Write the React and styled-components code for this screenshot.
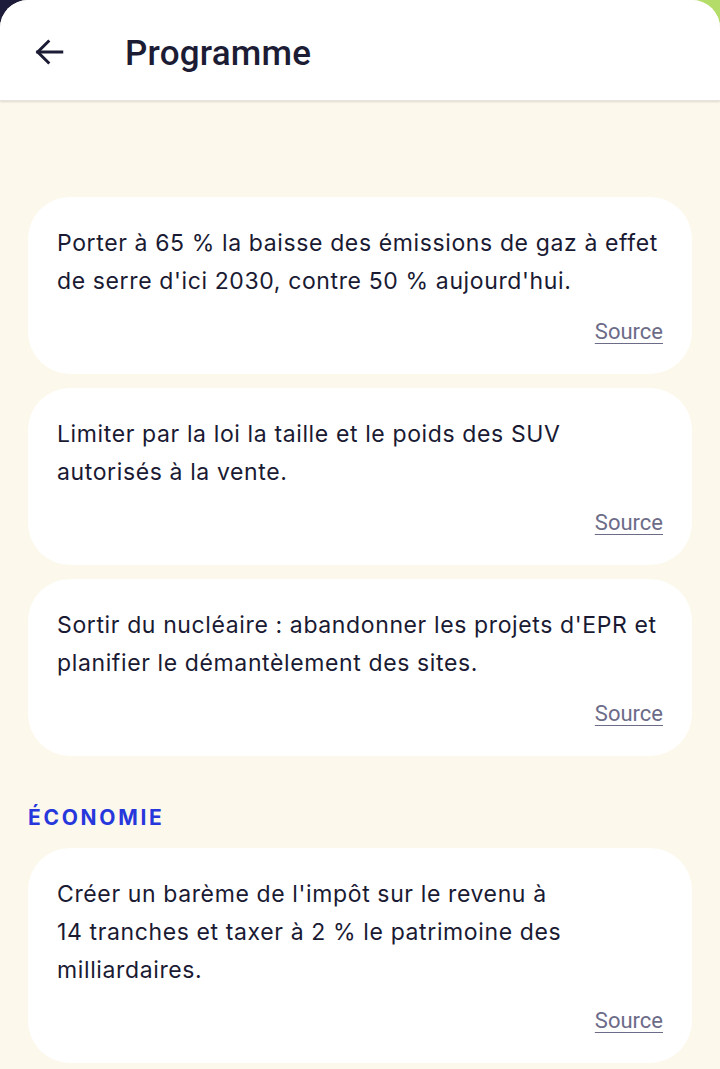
import React from "react";
import styled, { createGlobalStyle } from "styled-components";

const Global = createGlobalStyle`
  html, body { margin: 0; padding: 0; }
  body {
    background: linear-gradient(to right, #1d1d3b 0 50%, #b4dc69 50% 100%);
    font-family: Inter, "Noto Sans", sans-serif;
    -webkit-font-smoothing: antialiased;
  }
`;

const Screen = styled.div`
  width: 720px;
  height: 1069px;
  overflow: hidden;
  display: flex;
  flex-direction: column;
  background: #fdf8ec;
  border-radius: 28px 28px 0 0;
`;

const Header = styled.header`
  height: 101px;
  flex: none;
  background: #ffffff;
  display: flex;
  align-items: center;
  padding: 0 0 0 31px;
  gap: 58px;
  box-shadow: 0 1px 2px rgba(0, 0, 0, 0.12);
  border-bottom: 1px solid #e8e4dc;
  position: relative;
  z-index: 1;
  box-sizing: border-box;
`;

const BackButton = styled.button`
  border: 0;
  background: none;
  padding: 0;
  width: 36px;
  height: 36px;
  display: flex;
  align-items: center;
  justify-content: center;
  color: #1c1c35;
  margin-top: 4px;
`;

const Title = styled.h1`
  margin: 0;
  font-family: Roboto, Inter, sans-serif;
  font-size: 35px;
  font-weight: 500;
  color: #1c1c35;
  letter-spacing: 0.2px;
  margin-top: 6px;
`;

const Content = styled.main`
  padding: 96px 28px 0 28px;
  display: flex;
  flex-direction: column;
  gap: 14px;
`;

const Card = styled.article`
  background: #ffffff;
  border-radius: 42px;
  padding: 27px 29px 27px 29px;
  display: flex;
  flex-direction: column;
`;

const Text = styled.p`
  margin: 0;
  font-size: 23px;
  line-height: 38px;
  color: #1a1a33;
  letter-spacing: 0.62px;
`;

const SourceLink = styled.a`
  align-self: flex-end;
  margin-top: 17px;
  font-family: Roboto, Inter, sans-serif;
  font-size: 22px;
  line-height: 30px;
  color: #6d6c88;
  text-decoration: underline;
  text-underline-offset: 4px;
  text-decoration-thickness: 1px;
`;

const Section = styled.h2`
  margin: 35px 0 3px 0;
  font-size: 21px;
  line-height: 26px;
  font-weight: 700;
  letter-spacing: 2.7px;
  color: #2637dc;
  text-transform: uppercase;
`;

const items = [
  "Porter à 65 % la baisse des émissions de gaz à effet de serre d'ici 2030, contre 50 % aujourd'hui.",
  "Limiter par la loi la taille et le poids des SUV autorisés à la vente.",
  "Sortir du nucléaire : abandonner les projets d'EPR et planifier le démantèlement des sites.",
];

const ArrowLeft = () => (
  <svg width="36" height="36" viewBox="0 0 24 24" fill="none" stroke="currentColor" strokeWidth="2" strokeLinecap="square">
    <path d="M20.5 12H4.5" />
    <path d="M11.5 5L4.5 12l7 7" />
  </svg>
);

export default function App() {
  return (
    <>
      <Global />
      <Screen>
        <Header>
          <BackButton aria-label="Retour"><ArrowLeft /></BackButton>
          <Title>Programme</Title>
        </Header>
        <Content>
          {items.map((t) => (
            <Card key={t}>
              <Text>{t}</Text>
              <SourceLink href="#">Source</SourceLink>
            </Card>
          ))}
          <Section>Économie</Section>
          <Card>
            <Text>Créer un barème de l'impôt sur le revenu à<br />14 tranches et taxer à 2 % le patrimoine des milliardaires.</Text>
            <SourceLink href="#">Source</SourceLink>
          </Card>
        </Content>
      </Screen>
    </>
  );
}
